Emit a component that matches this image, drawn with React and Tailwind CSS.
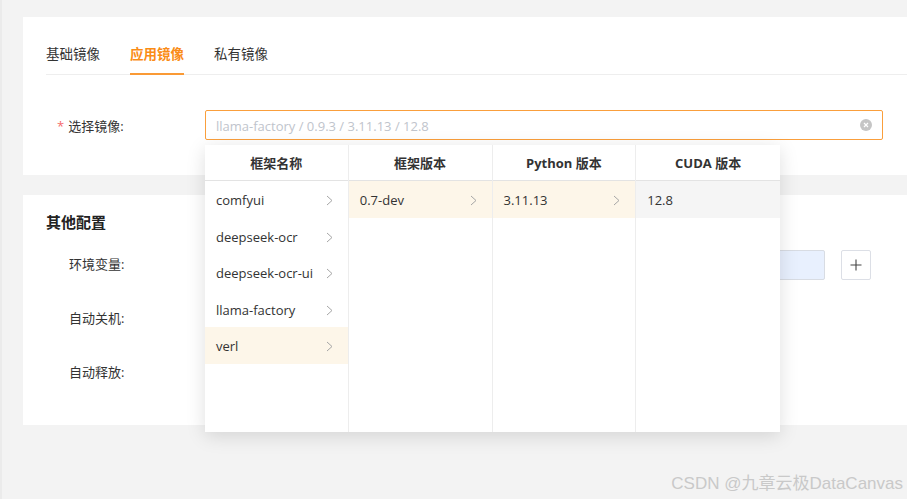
const font = { fontFamily: '"Open Sans", "Noto Sans CJK SC", sans-serif' }

const columns = [
  {
    title: '框架名称',
    items: ['comfyui', 'deepseek-ocr', 'deepseek-ocr-ui', 'llama-factory', 'verl'],
    active: 4,
    arrow: true,
  },
  { title: '框架版本', items: ['0.7-dev'], active: 0, arrow: true },
  { title: 'Python 版本', items: ['3.11.13'], active: 0, arrow: true },
  { title: 'CUDA 版本', items: ['12.8'], hover: 0, arrow: false },
]

const Chevron = () => (
  <svg width="7" height="11" viewBox="0 0 7 11" className="shrink-0">
    <polyline points="1,1 6,5.5 1,10" fill="none" stroke="#a6a6a6" strokeWidth="1" />
  </svg>
)

const CascaderPanel = () => (
  <div className="absolute left-0 top-[35px] z-10 grid h-[287px] w-[575px] grid-cols-4 bg-white shadow-[0_4px_18px_rgba(0,0,0,0.13)]">
    {columns.map((col, i) => (
      <div key={col.title} className={`flex flex-col ${i < 3 ? 'border-r border-[#ededed]' : ''}`}>
        <div className="flex h-[36px] shrink-0 items-center justify-center border-b border-[#e3e3e3] pt-[3px] text-[13px] font-bold text-[#333]">
          {col.title}
        </div>
        {col.items.map((item, j) => (
          <div
            key={item}
            className={`flex h-[36.5px] items-center justify-between pl-[11px] pr-[15px] pt-[3px] text-[13px] text-[#333] ${
              col.active === j ? 'bg-[#fdf6e9]' : col.hover === j ? 'bg-[#f5f5f5]' : ''
            }`}
          >
            <span>{item}</span>
            {col.arrow && <Chevron />}
          </div>
        ))}
      </div>
    ))}
  </div>
)

export default function App() {
  return (
    <div className="relative h-[499px] w-[907px] overflow-hidden border-l-2 border-[#ebebeb] bg-[#f3f3f3] pl-[21px] pt-[17px]" style={font}>
      <div className="h-[158px] bg-white pl-[23px] pt-[16px]">
        <div className="flex h-[42px] gap-[30px] border-b border-[#eeeeee] text-[13.5px]">
          <div className="flex items-center pt-[2px] text-[#333]">基础镜像</div>
          <div className="-mb-px flex items-center border-b-2 border-[#fa9a35] pt-[2px] font-semibold text-[#fa8c16]">应用镜像</div>
          <div className="flex items-center pt-[2px] text-[#333]">私有镜像</div>
        </div>

        <div className="mt-[35px] flex h-[30px] items-center">
          <div className="flex w-[159px] items-center pl-[11px] pt-[3px] text-[13px] text-[#333]">
            <span className="mr-[4px] text-[#f56c6c]">*</span>
            <span>选择镜像:</span>
          </div>
          <div className="relative">
            <div className="flex h-[30px] w-[678px] items-center justify-between rounded-[2px] border border-[#fa9f3c] pl-[10px] pr-[10px] text-[13px] text-[#c0c4cc]">
              <span className="pt-[3px]">llama-factory / 0.9.3 / 3.11.13 / 12.8</span>
              <span className="flex h-[12px] w-[12px] items-center justify-center rounded-full bg-[#c5c5c5]">
                <svg width="6" height="6" viewBox="0 0 6 6">
                  <path d="M1 1 L5 5 M5 1 L1 5" stroke="#fff" strokeWidth="1.2" />
                </svg>
              </span>
            </div>
            <CascaderPanel />
          </div>
        </div>
      </div>

      <div className="mt-[20px] h-[230px] bg-white pl-[23px] pt-[16px]">
        <div className="text-[15px] font-bold leading-[22px] text-[#222]">其他配置</div>
        <div className="mt-[17px] flex flex-col gap-[24px]">
          <div className="flex h-[30px] items-center">
            <div className="w-[159px] pl-[23px] text-[13px] text-[#333]">环境变量:</div>
            <div className="h-[30px] w-[620px] rounded-[2px] border border-[#d8dce3] bg-[#e8f0fe]" />
            <div className="ml-[16px] flex h-[30px] w-[30px] items-center justify-center rounded-[2px] border border-[#dcdfe6] bg-white text-[#333]">
              <svg width="12" height="12" viewBox="0 0 12 12">
                <path d="M6 0.5 V11.5 M0.5 6 H11.5" stroke="#444" strokeWidth="1.1" />
              </svg>
            </div>
          </div>
          <div className="flex h-[30px] items-center">
            <div className="w-[159px] pl-[23px] text-[13px] text-[#333]">自动关机:</div>
          </div>
          <div className="flex h-[30px] items-center">
            <div className="w-[159px] pl-[23px] text-[13px] text-[#333]">自动释放:</div>
          </div>
        </div>
      </div>

      <div
        className="absolute bottom-[3px] right-[4px] text-[17px] text-[#c9c9c9]"
        style={{ fontFamily: '"Liberation Sans", "Noto Sans CJK SC", sans-serif' }}
      >
        CSDN @九章云极DataCanvas
      </div>
    </div>
  )
}
